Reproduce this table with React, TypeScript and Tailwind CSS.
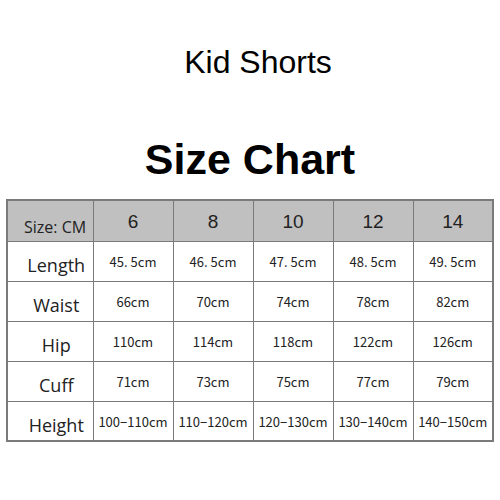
const sizes = ['6', '8', '10', '12', '14'];

const rows = [
  { label: 'Length', values: ['45. 5cm', '46. 5cm', '47. 5cm', '48. 5cm', '49. 5cm'] },
  { label: 'Waist', values: ['66cm', '70cm', '74cm', '78cm', '82cm'] },
  { label: 'Hip', values: ['110cm', '114cm', '118cm', '122cm', '126cm'] },
  { label: 'Cuff', values: ['71cm', '73cm', '75cm', '77cm', '79cm'] },
  { label: 'Height', values: ['100−110cm', '110−120cm', '120−130cm', '130−140cm', '140−150cm'] },
];

export default function App() {
  return (
    <div className="w-[500px] h-[500px] bg-white flex flex-col items-center overflow-hidden">
      <h2 className="mt-[44px] ml-[16px] text-[32px] leading-[36px] text-black font-['Liberation_Sans',Arial,sans-serif]">
        Kid Shorts
      </h2>
      <h1 className="mt-[56px] text-[43px] leading-[46px] font-bold text-black font-['Liberation_Sans',Arial,sans-serif]">
        Size Chart
      </h1>

      <table className="mt-[17px] border-collapse border-2 border-[#7a7a7a] text-[#222]">
        <thead>
          <tr className="h-[41px] bg-[#c0c0c0]">
            <th className="w-[86px] border border-[#7a7a7a] p-0 pt-[12px] pl-[16px] text-left align-middle text-[16px] font-normal whitespace-nowrap font-['Open_Sans',sans-serif]">
              Size: CM
            </th>
            {sizes.map((s) => (
              <th
                key={s}
                className="w-[80px] border border-[#7a7a7a] p-0 pt-[3px] text-center text-[19px] font-normal font-['Liberation_Sans',Arial,sans-serif]"
              >
                {s}
              </th>
            ))}
          </tr>
        </thead>
        <tbody>
          {rows.map((r) => (
            <tr key={r.label} className="h-[40px]">
              <td className="border border-[#7a7a7a] p-0 pt-[9px] pl-[12px] text-center text-[18px] font-['Open_Sans',sans-serif]">
                {r.label}
              </td>
              {r.values.map((v) => (
                <td
                  key={v}
                  className="border border-[#7a7a7a] p-0 pt-[2px] text-center text-[13px] whitespace-nowrap font-['Noto_Sans_CJK_SC','Liberation_Mono',monospace]"
                >
                  {v}
                </td>
              ))}
            </tr>
          ))}
        </tbody>
      </table>
    </div>
  );
}
